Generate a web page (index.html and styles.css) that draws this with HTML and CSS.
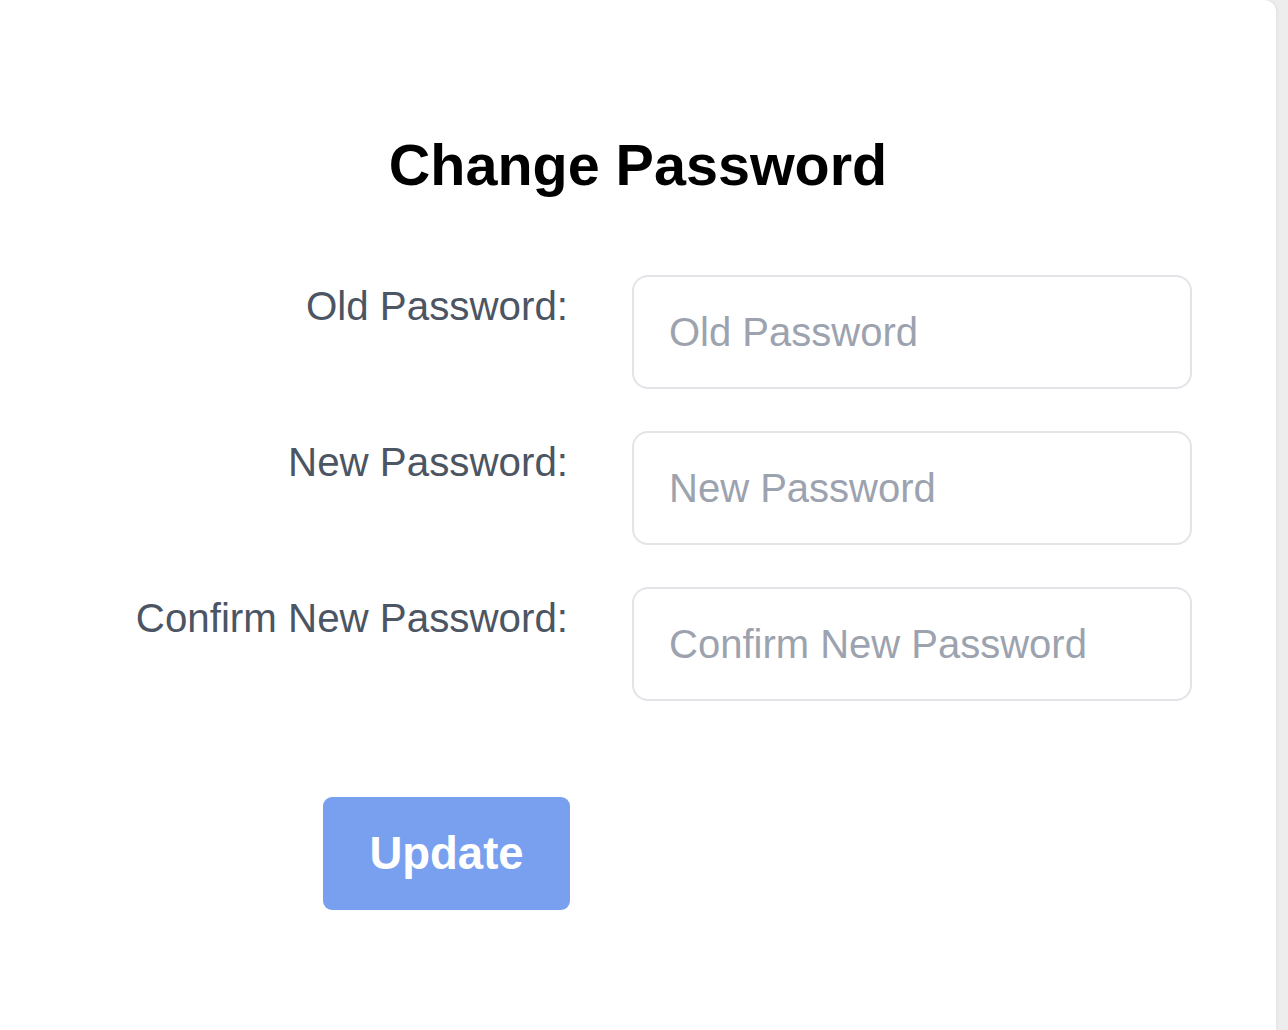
FILE: index.html
```html
<!DOCTYPE html>
<html lang="en">
<head>
<meta charset="utf-8">
<title>Change Password</title>
<link rel="stylesheet" href="styles.css">
</head>
<body>
<main class="card">
  <h1 class="title">Change Password</h1>
  <form class="form">
    <label class="label" for="old">Old Password:</label>
    <input class="field" id="old" type="password" placeholder="Old Password">
    <label class="label" for="new">New Password:</label>
    <input class="field" id="new" type="password" placeholder="New Password">
    <label class="label" for="confirm">Confirm New Password:</label>
    <input class="field" id="confirm" type="password" placeholder="Confirm New Password">
    <div class="actions">
      <button class="btn" type="button">Update</button>
    </div>
  </form>
</main>
</body>
</html>
```

FILE: styles.css
```css
html, body {
  margin: 0;
  padding: 0;
  height: 100%;
}
body {
  background: #ededed;
  font-family: "Liberation Sans", Arial, Helvetica, sans-serif;
  overflow: hidden;
}
.card {
  width: 1276px;
  min-height: 1030px;
  background: #ffffff;
  border-top-right-radius: 12px;
  box-shadow: 1px 0 4px rgba(0, 0, 0, 0.05);
  padding-top: 131px;
  box-sizing: border-box;
}
.title {
  margin: 0;
  text-align: center;
  font-size: 57.5px;
  line-height: 68px;
  font-weight: 700;
  color: #000;
}
.form {
  margin-top: 76px;
  display: grid;
  grid-template-columns: 571px 560px;
  column-gap: 61px;
  row-gap: 42px;
}
.label {
  text-align: right;
  font-size: 40.3px;
  line-height: 48px;
  padding-top: 8px;
  padding-right: 3px;
  color: #4b5563;
}
.field {
  height: 114px;
  box-sizing: border-box;
  border: 2px solid #e3e4e8;
  border-radius: 16px;
  padding: 0 35px;
  font-family: "Liberation Sans", Arial, Helvetica, sans-serif;
  font-size: 40px;
  color: #111827;
  background: #fff;
  outline: none;
}
.field::placeholder {
  color: #9ca3af;
  opacity: 1;
}
.actions {
  display: flex;
  justify-content: flex-end;
  margin-top: 54px;
}
.btn {
  width: 247px;
  height: 113px;
  border: none;
  border-radius: 9px;
  background: #78a0ef;
  color: #fff;
  font-family: "Liberation Sans", Arial, Helvetica, sans-serif;
  font-size: 45.5px;
  font-weight: 700;
  margin-right: 1px;
  padding: 0;
}
```
